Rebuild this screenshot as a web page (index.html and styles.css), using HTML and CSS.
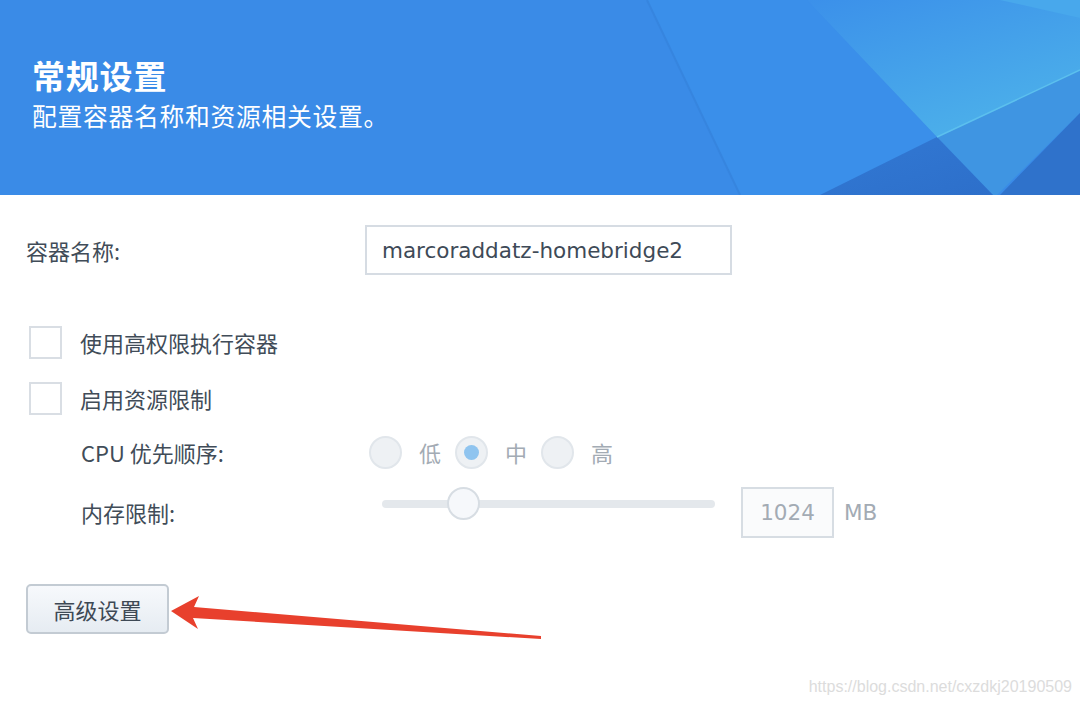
FILE: index.html
```html
<!DOCTYPE html>
<html lang="zh-CN">
<head>
    <meta charset="UTF-8">
    <title>常规设置</title>
    <link rel="stylesheet" href="styles.css">
</head>
<body>
    <div class="page">
        <header class="banner">
            <svg class="banner-bg" viewBox="0 0 1080 195" preserveAspectRatio="none">
                <defs>
                    <linearGradient id="glow" x1="0" y1="0" x2="0.6" y2="1">
                        <stop offset="0" stop-color="#3b90ea"/>
                        <stop offset="1" stop-color="#4cb0ea"/>
                    </linearGradient>
                    <linearGradient id="deep" x1="0" y1="0" x2="1" y2="1">
                        <stop offset="0" stop-color="#3279d4"/>
                        <stop offset="1" stop-color="#2d6fca"/>
                    </linearGradient>
                </defs>
                <rect width="1080" height="195" fill="#3a8be7"/>
                <polygon points="647,0 807,0 937,137 820,195 740,195" fill="#3a8fea"/>
                <polygon points="807,0 1080,0 1080,70 937,137" fill="url(#glow)"/>
                <polygon points="1000,0 1080,0 1080,18" fill="#48a8ec"/>
                <polygon points="937,137 1080,70 1080,113 997,195 993,195" fill="#3f95e2"/>
                <polygon points="820,195 937,137 993,195" fill="url(#deep)"/>
                <polygon points="1080,113 1080,195 1000,195" fill="#2f72cb"/>
                <line x1="647" y1="0" x2="740" y2="195" stroke="#3685df" stroke-width="2"/>
                <line x1="937" y1="137" x2="1080" y2="70" stroke="#5cc0ee" stroke-width="1.5"/>
            </svg>
            <h1 class="banner-title">常规设置</h1>
            <p class="banner-sub">配置容器名称和资源相关设置。</p>
        </header>

        <main class="form">
            <div class="row name-row">
                <span class="label name-label">容器名称:</span>
                <div class="text-box">marcoraddatz-homebridge2</div>
            </div>

            <div class="row check-row first">
                <span class="checkbox"></span>
                <span class="label">使用高权限执行容器</span>
            </div>
            <div class="row check-row">
                <span class="checkbox"></span>
                <span class="label">启用资源限制</span>
            </div>

            <div class="row sub-row cpu-row">
                <span class="label sub-label">CPU 优先顺序:</span>
                <div class="radios">
                    <span class="radio"></span><span class="radio-text">低</span>
                    <span class="radio checked"></span><span class="radio-text">中</span>
                    <span class="radio"></span><span class="radio-text">高</span>
                </div>
            </div>

            <div class="row sub-row mem-row">
                <span class="label sub-label">内存限制:</span>
                <div class="slider">
                    <div class="track"></div>
                    <div class="thumb"></div>
                </div>
                <div class="num-box">1024</div>
                <span class="unit">MB</span>
            </div>

            <button class="btn">高级设置</button>
        </main>

        <svg class="pointer" viewBox="0 0 1080 704">
            <polygon points="171,611 199,596 194,607 541,636 541,639 193,618 198,629" fill="#e8402d"/>
        </svg>

        <div class="watermark">https://blog.csdn.net/cxzdkj20190509</div>
    </div>
</body>
</html>
```

FILE: styles.css
```css
* {
    margin: 0;
    padding: 0;
    box-sizing: border-box;
}

body {
    font-family: "Noto Sans CJK SC", "Noto Sans", sans-serif;
    background: #ffffff;
    color: #3e4955;
}

.page {
    position: relative;
    width: 1080px;
    height: 704px;
    overflow: hidden;
}

.banner {
    position: relative;
    height: 195px;
    padding: 57px 0 0 32px;
    color: #ffffff;
}

.banner-bg {
    position: absolute;
    top: 0;
    left: 0;
    width: 100%;
    height: 100%;
    z-index: 0;
}

.banner-title,
.banner-sub {
    position: relative;
    z-index: 1;
}

.banner-title {
    font-size: 33px;
    line-height: 37px;
    font-weight: 700;
    letter-spacing: 0.8px;
}

.banner-sub {
    margin-top: 7px;
    font-size: 24.8px;
    line-height: 29px;
    font-weight: 400;
    letter-spacing: 0.7px;
}

.form {
    padding: 30px 0 0 26px;
}

.row {
    display: flex;
    align-items: center;
}

.label {
    font-size: 22px;
    color: #414c58;
}

.name-row {
    height: 50px;
}

.name-label {
    width: 339px;
}

.text-box {
    width: 367px;
    height: 50px;
    border: 2px solid #d6dce3;
    padding: 0 0 0 15px;
    display: flex;
    align-items: center;
    font-family: "DejaVu Sans", sans-serif;
    font-size: 21.5px;
    color: #3e4a57;
}

.check-row {
    height: 32px;
    gap: 18px;
    margin-top: 24px;
}

.check-row.first {
    margin-top: 51px;
}

.checkbox {
    width: 33px;
    height: 33px;
    margin-left: 3px;
    border: 2px solid #d9dee4;
    background: #ffffff;
}

.sub-row {
    padding-left: 55px;
}

.cpu-row {
    height: 34px;
    margin-top: 21px;
}

.sub-label {
    width: 288px;
}

.radios {
    display: flex;
    align-items: center;
}

.radio {
    position: relative;
    width: 33px;
    height: 33px;
    border-radius: 50%;
    border: 2px solid #e1e6eb;
    background: #eef1f4;
}

.radio.checked::after {
    content: "";
    position: absolute;
    top: 7px;
    left: 7px;
    width: 15px;
    height: 15px;
    border-radius: 50%;
    background: #8fc4ef;
}

.radio-text {
    font-size: 22px;
    color: #a3abb4;
    margin: 0 14px 0 17px;
}

.mem-row {
    height: 50px;
    margin-top: 18px;
}

.slider {
    position: relative;
    align-self: flex-start;
    width: 346px;
    height: 33px;
    display: flex;
    align-items: center;
    padding-left: 13px;
}

.track {
    width: 333px;
    height: 8px;
    border-radius: 4px;
    background: #e4e8ec;
}

.thumb {
    position: absolute;
    top: 0;
    left: 78px;
    width: 33px;
    height: 33px;
    border-radius: 50%;
    border: 2px solid #d7dde3;
    background: #f6f8fb;
}

.num-box {
    width: 93px;
    height: 51px;
    margin-left: 26px;
    border: 2px solid #d7dde3;
    background: #fafbfc;
    display: flex;
    align-items: center;
    justify-content: center;
    font-family: "DejaVu Sans", sans-serif;
    font-size: 21.5px;
    color: #a3abb4;
}

.unit {
    margin-left: 10px;
    font-family: "DejaVu Sans", sans-serif;
    font-size: 21.5px;
    color: #a3abb4;
}

.btn {
    display: block;
    margin-top: 47px;
    width: 143px;
    height: 50px;
    border: 2px solid #c3cbd3;
    border-radius: 5px;
    background: linear-gradient(#f7f9fc, #e6ecf2);
    font-family: "Noto Sans CJK SC", sans-serif;
    font-size: 22px;
    color: #3e4955;
}

.pointer {
    position: absolute;
    top: 0;
    left: 0;
    width: 1080px;
    height: 704px;
    pointer-events: none;
}

.watermark {
    position: absolute;
    right: 8px;
    bottom: 8px;
    font-family: "Liberation Sans", sans-serif;
    font-size: 16px;
    color: #dcdcdc;
}
```
